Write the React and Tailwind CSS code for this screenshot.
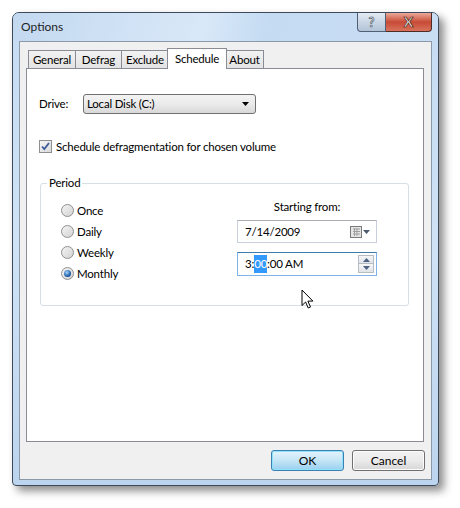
import React from 'react';

const font = { fontFamily: 'Lato, "Liberation Sans", sans-serif' };

// small drawn pieces
const Radio = ({ checked }) => (
  <span className="w-[13px] h-[13px] rounded-full border border-[#8e8f8f] bg-gradient-to-br from-[#f4f4f4] to-[#d2d2d2] flex items-center justify-center">
    {checked && (
      <span className="w-[7px] h-[7px] rounded-full bg-[radial-gradient(circle_at_40%_35%,#a6d5ff,#1f5ea8_60%,#0d3c7a)]" />
    )}
  </span>
);

const Tab = ({ label, className }) => (
  <div
    className={`h-[18px] border border-b-0 border-[#898c95] bg-gradient-to-b from-[#f2f2f2] to-[#e3e3e3] flex items-center justify-center ${className}`}
  >
    {label}
  </div>
);

const TriDown = ({ className }) => (
  <svg width="7" height="4" viewBox="0 0 7 4" className={className}>
    <path d="M0 0h7L3.5 4z" fill="currentColor" />
  </svg>
);

const Cursor = () => (
  <svg width="13" height="20" viewBox="0 0 13 20" className="absolute left-[260px] top-[98px]">
    <path
      d="M1 1v15.5l3.6-3.5 2.6 6 2.3-1-2.6-5.9h5z"
      fill="#fff"
      stroke="#000"
      strokeWidth="1"
      strokeLinejoin="miter"
    />
  </svg>
);

export default function App() {
  return (
    <div className="w-[460px] h-[508px] bg-white pt-[12px] pl-[12px] text-black" style={font}>
      <div className="w-[427px] h-[474px] rounded-t-[7px] rounded-b-[4px] border border-[#3c4a5c] bg-gradient-to-b from-[#c6dcf2] via-[#cfe2f6] to-[#bcd4ee] shadow-[5px_5px_9px_rgba(0,0,0,0.45)] flex flex-col">
        {/* title bar */}
        <div className="h-[28px] flex justify-between items-start pr-[6px] bg-[linear-gradient(100deg,#c3d9f0_0%,#d9e8f8_45%,#c4dbf2_60%,#c9ddf3_100%)] rounded-t-[6px]">
          <span className="pl-[8px] pt-[5px] text-[12px] text-[#1e1e1e]">Options</span>
          <div className="flex">
            <div className="w-[29px] h-[19px] border border-[#4f6075] border-t-0 rounded-bl-[4px] bg-gradient-to-b from-[#e3ebf4] via-[#c9d6e4] to-[#b3c4d8] flex items-center justify-center">
              <span className="text-[13px] font-bold leading-none text-white [-webkit-text-stroke:0.6px_#2e3c50]">?</span>
            </div>
            <div className="w-[46px] h-[19px] border border-[#4f2a25] border-t-0 border-l-0 rounded-br-[4px] bg-gradient-to-b from-[#e9a89a] via-[#c74a35] to-[#d8725c] flex items-center justify-center">
              <span className="text-[14px] font-bold leading-none text-white [-webkit-text-stroke:0.7px_#4a1a12]">X</span>
            </div>
          </div>
        </div>

        {/* client area */}
        <div className="mx-[6px] h-[439px] border border-[#8b98a8] bg-[#f0f0f0] flex flex-col text-[11.5px] tracking-[-0.2px]">
          <div className="flex items-end h-[26px] pl-[8px] pt-[6px]">
            <Tab label="General" className="w-[48px]" />
            <Tab label="Defrag" className="w-[47px] -ml-px" />
            <Tab label="Exclude" className="w-[48px] -ml-px" />
            <div className="relative z-10 -ml-[2px] -mb-px w-[60px] h-[21px] border border-b-0 border-[#898c95] bg-white flex items-start justify-center pt-[1px]">
              Schedule
            </div>
            <Tab label="About" className="w-[39px] -ml-[2px]" />
          </div>

          {/* tab panel */}
          <div className="ml-[6px] mr-[7px] h-[374px] border border-[#898c95] bg-white px-[12px] pt-[25px]">
            <div className="flex items-center h-[20px]">
              <span className="w-[44px]">Drive:</span>
              <div className="w-[173px] h-[20px] rounded-[3px] border border-[#707070] bg-gradient-to-b from-[#f3f3f3] via-[#ebebeb] to-[#d8d8d8] flex items-center justify-between pl-[3px] pr-[6px]">
                <span>Local Disk (C:)</span>
                <TriDown className="text-black" />
              </div>
            </div>

            <div className="flex items-center mt-[26px] h-[13px]">
              <span className="w-[13px] h-[13px] border border-[#8e8f8f] bg-gradient-to-br from-[#f6f6f6] to-[#dadada] flex items-center justify-center">
                <svg width="9" height="9" viewBox="0 0 9 9">
                  <path d="M1 4.5l2.3 2.5L8 1" fill="none" stroke="#3d5a9b" strokeWidth="1.8" />
                </svg>
              </span>
              <span className="ml-[4px]">Schedule defragmentation for chosen volume</span>
            </div>

            <fieldset className="relative mt-[22px] ml-px w-[369px] h-[131px] border border-[#d5dfe5] rounded-[3px] px-0">
              <legend className="ml-[6px] px-[2px] leading-[16px]">Period</legend>
              <div className="flex pt-[7px]">
                <div className="pl-[20px] pt-[2px] flex flex-col">
                  {['Once', 'Daily', 'Weekly', 'Monthly'].map((p) => (
                    <div key={p} className="h-[21px] flex items-center">
                      <Radio checked={p === 'Monthly'} />
                      <span className="ml-[3px]">{p}</span>
                    </div>
                  ))}
                </div>
                <div className="ml-auto mr-[31px] w-[140px] flex flex-col">
                  <div className="h-[16px] text-center">Starting from:</div>
                  <div className="mt-[6px] h-[23px] border border-[#c7d0db] border-t-[#abadb3] flex items-center justify-between pl-[7px] pr-[6px]">
                    <span>7/14/2009</span>
                    <div className="flex items-center gap-[1px]">
                      <svg width="12" height="12" viewBox="0 0 12 12">
                        <rect x="0.5" y="0.5" width="11" height="11" fill="#e6e6e6" stroke="#7a7a7a" />
                        <path d="M3 3h7M3 5.5h7M3 8h7M4.5 2v8M7 2v8" stroke="#a0a0a0" strokeWidth="1" />
                      </svg>
                      <TriDown className="text-[#4d5a70]" />
                    </div>
                  </div>
                  <div className="mt-[9px] h-[24px] border border-[#7eb4ea] border-t-[#3d7bad] flex items-center justify-between pl-[7px] pr-[2px]">
                    <span className="flex">
                      3:<span className="bg-[#3399ff] text-white">00</span>:00 AM
                    </span>
                    <div className="flex flex-col">
                      <div className="w-[16px] h-[9px] border border-[#b4bcc6] bg-gradient-to-b from-[#f7f7f7] to-[#e0e3e8] flex items-center justify-center">
                        <svg width="7" height="4" viewBox="0 0 7 4"><path d="M0 4h7L3.5 0z" fill="#4d6185" /></svg>
                      </div>
                      <div className="w-[16px] h-[9px] border border-t-0 border-[#b4bcc6] bg-gradient-to-b from-[#f7f7f7] to-[#e0e3e8] flex items-center justify-center">
                        <TriDown className="text-[#4d6185]" />
                      </div>
                    </div>
                  </div>
                </div>
              </div>
              <Cursor />
            </fieldset>
          </div>

          {/* buttons */}
          <div className="flex justify-end gap-[8px] mt-[8px] mr-[6px] text-[12px] tracking-normal">
            <button className="w-[73px] h-[21px] rounded-[3px] border border-[#3c7fb1] bg-gradient-to-b from-[#e5f4fc] via-[#c4e5f6] to-[#98d1ef] shadow-[inset_0_0_0_1px_#8ee2fb]">
              OK
            </button>
            <button className="w-[73px] h-[21px] rounded-[3px] border border-[#707070] bg-gradient-to-b from-[#f2f2f2] via-[#ebebeb] to-[#d6d6d6] shadow-[inset_0_0_0_1px_#fcfcfc]">
              Cancel
            </button>
          </div>
        </div>
      </div>
    </div>
  );
}
